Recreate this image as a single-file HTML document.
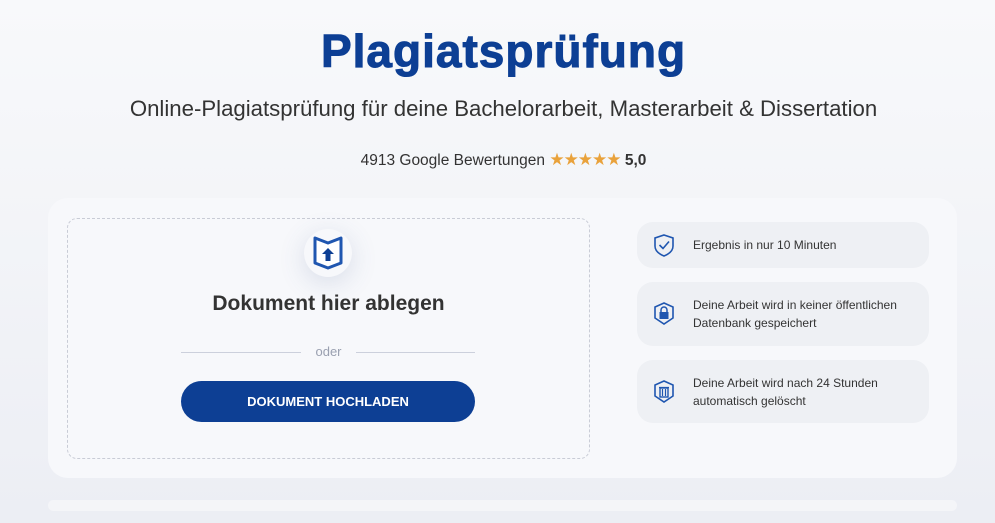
<!DOCTYPE html>
<html><head><meta charset="utf-8"><style>
*{margin:0;padding:0;box-sizing:border-box}
body{width:995px;height:523px;overflow:hidden;background:linear-gradient(180deg,#f8f9fb 0%,#eceef4 100%);font-family:"Liberation Sans",sans-serif;position:relative;color:#333}
h1{position:absolute;top:24px;left:6px;width:995px;text-align:center;font-size:46px;font-weight:900;color:#0d3f94;letter-spacing:1px;-webkit-text-stroke:1px #0d3f94}
.sub{position:absolute;top:96px;left:6px;width:995px;text-align:center;font-size:22.2px;color:#333}
.rate{position:absolute;top:150px;left:6px;width:995px;text-align:center;font-size:15.5px;color:#333}
.rate .s{color:#e9a23b;font-size:17px;letter-spacing:-1px}
.card{position:absolute;left:48px;top:198px;width:909px;height:280px;background:#f7f8fb;border-radius:20px}
.drop{position:absolute;left:67px;top:218px;width:523px;height:241px;border:1px dashed #c9ccd6;border-radius:10px}
.icon{position:absolute;left:236px;top:10px;width:48px;height:48px;border-radius:50%;box-shadow:0 6px 26px rgba(80,100,150,.18);background:#f7f8fb}
.icon svg{position:absolute;left:6px;top:6px}
.dt{position:absolute;top:73px;width:100%;text-align:center;font-size:21px;font-weight:bold;color:#333}
.line{position:absolute;top:133px;height:1px;background:#ccd0dc}
.oder{position:absolute;top:125px;width:100%;text-align:center;font-size:13px;color:#9aa0b0}
.btn{position:absolute;left:113px;top:162px;width:294px;height:41px;border-radius:21px;background:#0d3f94;color:#fff;font-size:13px;font-weight:bold;text-align:center;line-height:41px}
.f{position:absolute;left:637px;width:292px;background:#eef0f4;border-radius:16px;font-size:12px;color:#333;line-height:18px}
.f svg{position:absolute;left:16px}
.f div{position:absolute;left:56px}
.bar{position:absolute;left:48px;top:500px;width:909px;height:11px;background:#f4f5f8;border-radius:6px}
</style></head><body>
<h1>Plagiatsprüfung</h1>
<div class="sub">Online-Plagiatsprüfung für deine Bachelorarbeit, Masterarbeit &amp; Dissertation</div>
<div class="rate">4913 Google Bewertungen <span class="s">★★★★★</span> <b>5,0</b></div>
<div class="card"></div>
<div class="drop">
 <div class="icon"><svg width="36" height="36" viewBox="0 0 36 36"><path d="M5 3 L18 8 L31 3 L31 28 L18 33 L5 28 Z" fill="#fff" stroke="#1f56b0" stroke-width="3" stroke-linejoin="round"/><path d="M18 13 L12 19 H15.5 V26 H20.5 V19 H24 Z" fill="#0d3f94"/></svg></div>
 <div class="dt">Dokument hier ablegen</div>
 <div class="line" style="left:113px;width:120px"></div>
 <div class="line" style="left:288px;width:119px"></div>
 <div class="oder">oder</div>
 <div class="btn">DOKUMENT HOCHLADEN</div>
</div>
<div class="f" style="top:222px;height:46px"><svg width="22" height="26" viewBox="0 0 22 26" style="top:11px"><path d="M11 2 L20 5 V13 C20 18 16 21 11 23 C6 21 2 18 2 13 V5 Z" fill="none" stroke="#1f56b0" stroke-width="1.6"/><path d="M6.5 12 L10 15.5 L16 8.5" fill="none" stroke="#1f56b0" stroke-width="1.6"/></svg><div style="top:14px">Ergebnis in nur 10 Minuten</div></div>
<div class="f" style="top:282px;height:64px"><svg width="22" height="26" viewBox="0 0 22 26" style="top:19px"><path d="M11 2 L20 6 V17 L11 23 L2 17 V6 Z" fill="none" stroke="#1f56b0" stroke-width="1.6"/><rect x="6.5" y="11" width="9" height="7" fill="#1f56b0"/><path d="M8 11 V9 A3 3 0 0 1 14 9 V11" fill="none" stroke="#1f56b0" stroke-width="1.5"/></svg><div style="top:14px">Deine Arbeit wird in keiner öffentlichen<br>Datenbank gespeichert</div></div>
<div class="f" style="top:360px;height:63px"><svg width="22" height="26" viewBox="0 0 22 26" style="top:19px"><path d="M11 2 L20 6 V17 L11 23 L2 17 V6 Z" fill="none" stroke="#1f56b0" stroke-width="1.6"/><rect x="7" y="9" width="8" height="9" fill="none" stroke="#1f56b0" stroke-width="1.4"/><path d="M6 8.5 H16 M9.5 10 V17 M12.5 10 V17" stroke="#1f56b0" stroke-width="1.2"/></svg><div style="top:14px">Deine Arbeit wird nach 24 Stunden<br>automatisch gelöscht</div></div>
<div class="bar"></div>
</body></html>
